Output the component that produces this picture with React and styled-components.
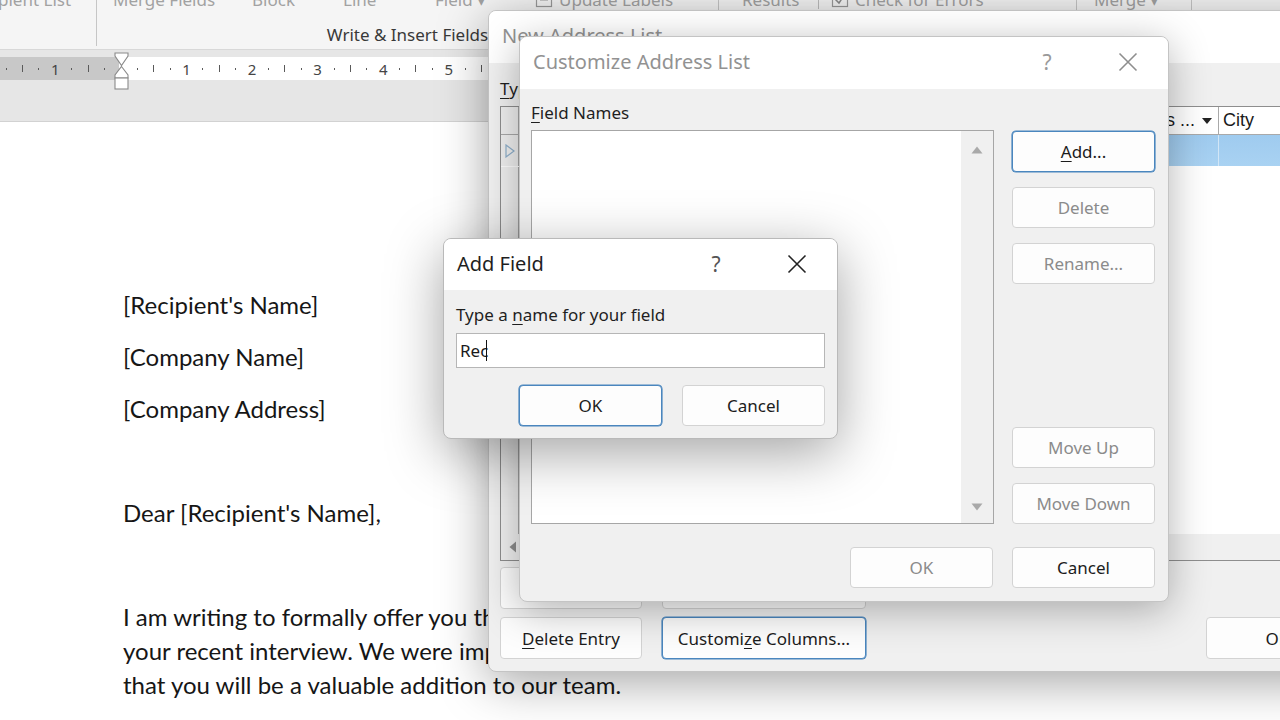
import React from 'react';
import styled, { createGlobalStyle, css } from 'styled-components';

const Global = createGlobalStyle`
  html, body { margin: 0; padding: 0; width: 1280px; height: 720px; overflow: hidden; background: #fff; }
  * { box-sizing: border-box; }
  body { font-family: "Noto Sans", "Open Sans", sans-serif; }
  #root { width: 1280px; height: 720px; }
`;

const UI = `"Noto Sans", "Open Sans", sans-serif`;

const Page = styled.div`
  position: relative;
  width: 1280px;
  height: 720px;
  overflow: hidden;
  background: #fff;
  display: flex;
  flex-direction: column;
`;

/* ---------- Ribbon ---------- */
const Ribbon = styled.div`
  height: 50px;
  flex-shrink: 0;
  background: #f5f5f5;
  border-bottom: 1px solid #d8d8d8;
  display: flex;
  align-items: flex-start;
  font-family: ${UI};
`;

const Group = styled.div`
  width: ${p => p.$w}px;
  flex-shrink: 0;
  height: 46px;
  display: flex;
  flex-direction: column;
  border-right: ${p => (p.$sep ? '1px solid #c6c6c6' : 'none')};
`;

const GroupTop = styled.div`
  display: flex;
  align-items: center;
  margin-top: -14px;
  height: 26px;
  padding-left: ${p => p.$pl || 0}px;
  font-size: 17px;
  color: #a2a2a2;
  white-space: nowrap;
`;

const TopItem = styled.div`
  width: ${p => (p.$w ? `${p.$w}px` : 'auto')};
  flex-shrink: 0;
  display: flex;
  align-items: center;
  gap: 6px;
  margin-left: ${p => p.$ml || 0}px;
`;

const MiniSep = styled.div`
  width: 1px;
  height: 20px;
  background: #bdbdbd;
  margin: 0 12px 0 0;
`;

const GroupName = styled.div`
  margin-top: auto;
  height: 22px;
  line-height: 22px;
  text-align: center;
  font-size: 17px;
  color: #393939;
  white-space: nowrap;
`;

/* ---------- Ruler ---------- */
const RulerBand = styled.div`
  position: relative;
  height: 72px;
  flex-shrink: 0;
  background: #e6e6e6;
  border-bottom: 1px solid #d2d2d2;
  padding-top: 7px;
`;

const RulerStrip = styled.div`
  height: 23px;
  background: linear-gradient(to right, #c8c8c8 0, #c8c8c8 121px, #ffffff 121px);
  display: flex;
  align-items: center;
  margin-left: -2px;
`;

const Tick = styled.div`
  width: 16.4px;
  flex-shrink: 0;
  display: flex;
  align-items: center;
  justify-content: center;
  font-family: ${UI};
  font-size: 15px;
  color: #454545;
  height: 23px;
`;

const TickMark = styled.div`
  width: 1px;
  height: ${p => (p.$long ? 7 : 2)}px;
  background: #5a5a5a;
`;

const IndentMarker = styled.div`
  position: absolute;
  left: 114px;
  top: 2px;
  width: 15px;
  height: 40px;
`;

/* ---------- Document ---------- */
const Doc = styled.div`
  flex: 1;
  background: #fff;
  padding: 166px 0 0 123px;
  font-family: Lato, Carlito, "Liberation Sans", sans-serif;
  font-size: 24px;
  color: #161616;
`;

const Para = styled.div`
  margin: 0 0 18px;
  line-height: 34px;
  min-height: 34px;
  white-space: nowrap;
`;

const Line = styled.span`
  display: block;
`;

/* ---------- Windows ---------- */
const Window = styled.div`
  position: absolute;
  left: ${p => p.$x}px;
  top: ${p => p.$y}px;
  width: ${p => p.$w}px;
  height: ${p => p.$h}px;
  background: #f0f0f0;
  border: 1px solid ${p => p.$border || '#c4c4c4'};
  border-radius: 8px;
  overflow: hidden;
  display: flex;
  flex-direction: column;
  box-shadow: ${p => p.$shadow};
  font-family: ${UI};
`;

const TitleBar = styled.div`
  height: ${p => p.$h}px;
  flex-shrink: 0;
  background: #ffffff;
  display: flex;
  align-items: center;
  padding-left: 13px;
  padding-bottom: ${p => p.$pb || 0}px;
  font-size: 20px;
  color: ${p => (p.$inactive ? '#929292' : '#1f1f1f')};
`;

const TitleText = styled.div`
  flex: 1;
  white-space: nowrap;
`;

const TitleControls = styled.div`
  display: flex;
  gap: 35px;
  padding-right: 17px;
  height: 100%;
`;

const TitleBtn = styled.div`
  width: 46px;
  height: 100%;
  display: flex;
  align-items: center;
  justify-content: center;
  font-size: 21px;
  color: ${p => (p.$inactive ? '#9a9a9a' : '#555')};
`;

const U = styled.span`
  text-decoration: underline;
  text-underline-offset: 3px;
  text-decoration-thickness: 1px;
`;

const Btn = styled.div`
  width: ${p => p.$w || 143}px;
  height: ${p => p.$h || 41}px;
  flex-shrink: 0;
  background: #fdfdfd;
  border: 1px solid ${p => (p.$focus ? '#4a86be' : '#d3d3d3')};
  border-radius: 4px;
  display: flex;
  align-items: center;
  justify-content: center;
  font-size: 17px;
  color: ${p => (p.$disabled ? '#8b8b8b' : '#1c1c1c')};
  white-space: nowrap;
  margin-left: ${p => (p.$push ? 'auto' : '0')};
  ${p =>
    p.$focus &&
    css`
      box-shadow: 0 0 0 0.6px #4a86be;
    `}
`;

/* ---------- New Address List ---------- */
const NalBody = styled.div`
  flex: 1;
  display: flex;
  flex-direction: column;
  padding: 14px 12px 0 11px;
`;

const NalLabel = styled.div`
  height: 24px;
  line-height: 24px;
  font-size: 17px;
  color: #1f1f1f;
  white-space: nowrap;
`;

const Table = styled.div`
  margin-top: 5px;
  height: 455px;
  border: 1px solid #8e8e8e;
  background: #fff;
  display: flex;
  flex-direction: column;
  font-family: "Liberation Sans", Arial, sans-serif;
`;

const TRow = styled.div`
  height: ${p => p.$h}px;
  flex-shrink: 0;
  display: flex;
  border-bottom: 1px solid ${p => (p.$head ? '#a9a9a9' : 'transparent')};
`;

const RowHead = styled.div`
  width: 18px;
  flex-shrink: 0;
  background: #f0f0f0;
  border-right: 1px solid #a6a6a6;
  display: flex;
  align-items: center;
  justify-content: center;
`;

const HeadCell = styled.div`
  width: ${p => p.$w}px;
  flex-shrink: 0;
  display: flex;
  align-items: center;
  gap: 7px;
  padding: 0 6px 0 4px;
  border-right: 1px solid #a9a9a9;
  font-size: 18px;
  color: #1a1a1a;
  white-space: nowrap;
  overflow: hidden;
`;

const HeadLabel = styled.span`
  flex: 1;
  min-width: 0;
  display: flex;
  justify-content: ${p => (p.$right ? 'flex-end' : 'flex-start')};
  overflow: hidden;
`;

const Cell = styled.div`
  width: ${p => p.$w}px;
  flex-shrink: 0;
  background: linear-gradient(#9fcbef, #a9d2f2);
  border-right: 1px solid #d2e6f6;
`;

const TFill = styled.div`
  flex: 1;
  display: flex;
`;

const HScroll = styled.div`
  height: 26px;
  flex-shrink: 0;
  background: #f0f0f0;
  display: flex;
  align-items: center;
  padding-left: 8px;
`;

const BtnRow = styled.div`
  display: flex;
  gap: 20px;
  margin-top: ${p => p.$mt}px;
`;

/* ---------- Customize ---------- */
const CustBody = styled.div`
  flex: 1;
  display: flex;
  flex-direction: column;
  padding: 13px 13px 15px 11px;
`;

const CustGrid = styled.div`
  display: grid;
  grid-template-columns: 1fr 143px;
  grid-template-rows: 22px 394px;
  column-gap: 18px;
  row-gap: 6px;
`;

const FieldLabel = styled.div`
  grid-column: 1 / 3;
  font-size: 17px;
  line-height: 22px;
  color: #1f1f1f;
`;

const ListBox = styled.div`
  border: 1px solid #a6a6a6;
  background: #fff;
  display: flex;
`;

const ListArea = styled.div`
  flex: 1;
`;

const VScroll = styled.div`
  width: 32px;
  background: #f0f0f0;
  display: flex;
  flex-direction: column;
  justify-content: space-between;
  align-items: center;
  padding: 15px 0 12px;
`;

const SideButtons = styled.div`
  display: flex;
  flex-direction: column;
  justify-content: space-between;
  padding-top: 1px;
`;

const BtnStack = styled.div`
  display: flex;
  flex-direction: column;
  gap: 15px;
`;

const Footer = styled.div`
  display: flex;
  justify-content: flex-end;
  gap: 19px;
  margin-top: 23px;
`;

/* ---------- Add Field ---------- */
const AddBody = styled.div`
  flex: 1;
  display: flex;
  flex-direction: column;
  padding: 14px 12px 14px 12px;
`;

const AddLabel = styled.div`
  font-size: 17px;
  line-height: 22px;
  color: #1f1f1f;
`;

const Input = styled.div`
  margin-top: 7px;
  height: 35px;
  background: #fff;
  border: 1px solid #b6b6b6;
  display: flex;
  align-items: center;
  padding-left: 3px;
  font-size: 17px;
  color: #1a1a1a;
`;

const Caret = styled.span`
  display: inline-block;
  width: 1px;
  height: 21px;
  background: #111;
  margin-left: -2px;
`;

const AddButtons = styled.div`
  display: flex;
  justify-content: flex-end;
  gap: 20px;
  margin-top: 17px;
`;

/* ---------- Icons ---------- */
const XIcon = ({ color = '#222' }) => (
  <svg width="20" height="20" viewBox="0 0 20 20">
    <path d="M1.5 1.5 L18.5 18.5 M18.5 1.5 L1.5 18.5" stroke={color} strokeWidth="1.6" fill="none" />
  </svg>
);

const Tri = ({ up }) => (
  <svg width="12" height="8" viewBox="0 0 12 8">
    <path d={up ? 'M6 0.5 L11.5 7.5 H0.5 Z' : 'M0.5 0.5 H11.5 L6 7.5 Z'} fill="#a9a9a9" />
  </svg>
);

const DropTri = () => (
  <svg width="10" height="6" viewBox="0 0 10 6">
    <path d="M0 0 H10 L5 6 Z" fill="#222" />
  </svg>
);

const RowArrow = () => (
  <svg width="10" height="14" viewBox="0 0 10 14">
    <path d="M1 1 L9 7 L1 13 Z" fill="none" stroke="#8fb0cc" strokeWidth="1.2" />
  </svg>
);

const LeftArrow = () => (
  <svg width="8" height="12" viewBox="0 0 8 12">
    <path d="M7 0.5 V11.5 L0.5 6 Z" fill="#8d8d8d" />
  </svg>
);

const SmallIcon = ({ check }) => (
  <svg width="18" height="18" viewBox="0 0 18 18">
    <rect x="1.5" y="1.5" width="15" height="15" fill="none" stroke="#9a9a9a" strokeWidth="1.2" />
    {check ? (
      <path d="M4 9 L8 13 L14 4" fill="none" stroke="#8a8a8a" strokeWidth="1.5" />
    ) : (
      <path d="M5 6 H13 M5 10 H13" stroke="#9a9a9a" strokeWidth="1.2" />
    )}
  </svg>
);

const Hourglass = () => (
  <svg width="15" height="40" viewBox="0 0 15 40">
    <path d="M1 1 H14 V4 L7.5 13.5 L1 4 Z" fill="#fff" stroke="#8a8a8a" strokeWidth="1.1" />
    <path d="M7.5 14.5 L14 23 V26 H1 V23 Z" fill="#fff" stroke="#8a8a8a" strokeWidth="1.1" />
    <rect x="1" y="26" width="13" height="11" fill="#fff" stroke="#8a8a8a" strokeWidth="1.1" />
  </svg>
);

const ticks = [];
for (let i = -7; i <= 24; i++) {
  let content;
  if (i === 0) content = null;
  else if (i % 4 === 0) content = String(Math.abs(i / 4));
  else if (i % 2 === 0) content = <TickMark $long />;
  else content = <TickMark />;
  ticks.push(<Tick key={i}>{content}</Tick>);
}

const cols = [
  { label: 'Title', w: 80 },
  { label: 'First Name', w: 120 },
  { label: 'Last Name', w: 120 },
  { label: 'Company Name', w: 140 },
  { label: 'Address Line 1', w: 140 },
  { label: 'Address ...', w: 100, right: true },
  { label: 'City', w: 160, nodrop: true },
  { label: 'State', w: 120 },
];

export default function App() {
  return (
    <>
      <Global />
      <Page>
        <Ribbon>
          <Group $w={97} $sep>
            <GroupTop>
              <TopItem $ml={-2}>pient List</TopItem>
            </GroupTop>
          </Group>
          <Group $w={622} $sep>
            <GroupTop $pl={16}>
              <TopItem $w={139}>Merge Fields</TopItem>
              <TopItem $w={91}>Block</TopItem>
              <TopItem $w={92}>Line</TopItem>
              <TopItem $w={100}>Field ▾</TopItem>
              <TopItem>
                <SmallIcon />
                Update Labels
              </TopItem>
            </GroupTop>
            <GroupName>Write &amp; Insert Fields</GroupName>
          </Group>
          <Group $w={358} $sep>
            <GroupTop $pl={23}>
              <TopItem $w={76}>Results</TopItem>
              <MiniSep />
              <TopItem>
                <SmallIcon check />
                Check for Errors
              </TopItem>
            </GroupTop>
          </Group>
          <Group $w={115} $sep>
            <GroupTop $pl={17}>
              <TopItem>Merge ▾</TopItem>
            </GroupTop>
          </Group>
        </Ribbon>

        <RulerBand>
          <RulerStrip>{ticks}</RulerStrip>
          <IndentMarker>
            <Hourglass />
          </IndentMarker>
        </RulerBand>

        <Doc>
          <Para>[Recipient's Name]</Para>
          <Para>[Company Name]</Para>
          <Para>[Company Address]</Para>
          <Para>&nbsp;</Para>
          <Para>Dear [Recipient's Name],</Para>
          <Para>&nbsp;</Para>
          <Para>
            <Line>I am writing to formally offer you the position of [Job Title] at [Company Name], following</Line>
            <Line>your recent interview. We were impressed with your skills and experience, and we believe</Line>
            <Line>that you will be a valuable addition to our team.</Line>
          </Para>
        </Doc>

        {/* New Address List (inactive, behind) */}
        <Window $x={488} $y={10} $w={1037} $h={662} $shadow="0 10px 50px rgba(0,0,0,0.36)">
          <TitleBar $h={52} $pb={4} $inactive>
            <TitleText>New Address List</TitleText>
          </TitleBar>
          <NalBody>
            <NalLabel>
              <U>T</U>ype recipient information in the table. To add more entries, click New Entry.
            </NalLabel>
            <Table>
              <TRow $h={28} $head>
                <RowHead />
                {cols.map(c => (
                  <HeadCell key={c.label} $w={c.w}>
                    <HeadLabel $right={c.right}>
                      <span>{c.label}</span>
                    </HeadLabel>
                    {!c.nodrop && <DropTri />}
                  </HeadCell>
                ))}
              </TRow>
              <TRow $h={32}>
                <RowHead>
                  <RowArrow />
                </RowHead>
                {cols.map(c => (
                  <Cell key={c.label} $w={c.w} />
                ))}
              </TRow>
              <TFill>
                <RowHead />
              </TFill>
              <HScroll>
                <LeftArrow />
              </HScroll>
            </Table>
            <BtnRow $mt={6}>
              <Btn $w={142} $h={42}>New Entry</Btn>
              <Btn $w={204} $h={42}>Find...</Btn>
            </BtnRow>
            <BtnRow $mt={8}>
              <Btn $w={142} $h={42}>
                <U>D</U>elete Entry
              </Btn>
              <Btn $w={204} $h={42} $focus>
                Customi<U>z</U>e Columns...
              </Btn>
              <Btn $w={143} $h={42} $push>
                OK
              </Btn>
              <Btn $w={143} $h={42}>
                Cancel
              </Btn>
            </BtnRow>
          </NalBody>
        </Window>

        {/* Customize Address List */}
        <Window $x={519} $y={36} $w={650} $h={566} $shadow="0 8px 40px rgba(0,0,0,0.30)">
          <TitleBar $h={52} $pb={3} $inactive>
            <TitleText>Customize Address List</TitleText>
            <TitleControls>
              <TitleBtn $inactive>?</TitleBtn>
              <TitleBtn $inactive>
                <XIcon color="#8e8e8e" />
              </TitleBtn>
            </TitleControls>
          </TitleBar>
          <CustBody>
            <CustGrid>
              <FieldLabel>
                <U>F</U>ield Names
              </FieldLabel>
              <ListBox>
                <ListArea />
                <VScroll>
                  <Tri up />
                  <Tri />
                </VScroll>
              </ListBox>
              <SideButtons>
                <BtnStack>
                  <Btn $focus>
                    <U>A</U>dd...
                  </Btn>
                  <Btn $disabled>Delete</Btn>
                  <Btn $disabled>Rename...</Btn>
                </BtnStack>
                <BtnStack>
                  <Btn $disabled>Move Up</Btn>
                  <Btn $disabled>Move Down</Btn>
                </BtnStack>
              </SideButtons>
            </CustGrid>
            <Footer>
              <Btn $disabled>OK</Btn>
              <Btn>Cancel</Btn>
            </Footer>
          </CustBody>
        </Window>

        {/* Add Field */}
        <Window $x={443} $y={238} $w={395} $h={201} $border="#b9b9b9" $shadow="0 14px 56px rgba(0,0,0,0.36)">
          <TitleBar $h={51} $pb={2}>
            <TitleText>Add Field</TitleText>
            <TitleControls>
              <TitleBtn>?</TitleBtn>
              <TitleBtn>
                <XIcon color="#222" />
              </TitleBtn>
            </TitleControls>
          </TitleBar>
          <AddBody>
            <AddLabel>
              Type a <U>n</U>ame for your field
            </AddLabel>
            <Input>
              Rec
              <Caret />
            </Input>
            <AddButtons>
              <Btn $focus>OK</Btn>
              <Btn>Cancel</Btn>
            </AddButtons>
          </AddBody>
        </Window>
      </Page>
    </>
  );
}
